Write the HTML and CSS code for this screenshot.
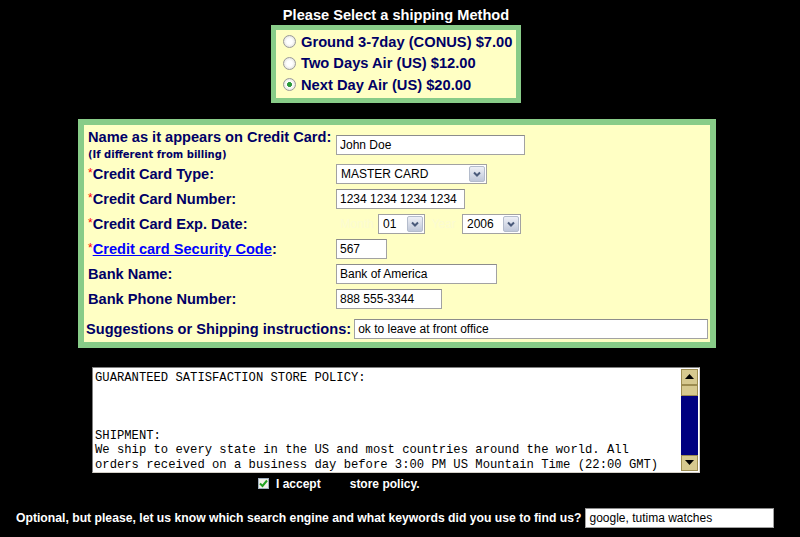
FILE: index.html
```html
<!DOCTYPE html>
<html lang="en">
<head>
    <meta charset="UTF-8">
    <title>Checkout - Payment</title>
    <link rel="stylesheet" href="styles.css">
</head>
<body>
    <div class="page">
        <h2 class="ship-title">Please Select a shipping Method</h2>
        <div class="ship-box">
            <div class="ship-option"><span class="radio"></span>Ground 3-7day (CONUS) $7.00</div>
            <div class="ship-option"><span class="radio"></span>Two Days Air (US) $12.00</div>
            <div class="ship-option"><span class="radio checked"></span>Next Day Air (US) $20.00</div>
        </div>

        <form class="card-box">
            <div class="card-row row-name">
                <div class="label">Name as it appears on Credit Card:<span class="note">(If different from billing)</span></div>
                <input type="text" class="field w-name" value="John Doe">
            </div>
            <div class="card-row">
                <div class="label"><span class="req">*</span>Credit Card Type:</div>
                <div class="select w-type">
                    <select><option>MASTER CARD</option><option>VISA</option></select>
                    <span class="select-btn"><svg width="14" height="14" viewBox="0 0 14 14"><path d="M4 5.5 L7 8.5 L10 5.5" fill="none" stroke="#4a5a7a" stroke-width="2"/></svg></span>
                </div>
            </div>
            <div class="card-row">
                <div class="label"><span class="req">*</span>Credit Card Number:</div>
                <input type="text" class="field w-number" value="1234 1234 1234 1234">
            </div>
            <div class="card-row">
                <div class="label"><span class="req">*</span>Credit Card Exp. Date:</div>
                <div class="exp">
                    <span class="hint w-month">Month</span>
                    <div class="select w-mm">
                        <select><option>01</option><option>02</option></select>
                        <span class="select-btn"><svg width="14" height="14" viewBox="0 0 14 14"><path d="M4 5.5 L7 8.5 L10 5.5" fill="none" stroke="#4a5a7a" stroke-width="2"/></svg></span>
                    </div>
                    <span class="hint w-year">Year</span>
                    <div class="select w-yy">
                        <select><option>2006</option><option>2007</option></select>
                        <span class="select-btn"><svg width="14" height="14" viewBox="0 0 14 14"><path d="M4 5.5 L7 8.5 L10 5.5" fill="none" stroke="#4a5a7a" stroke-width="2"/></svg></span>
                    </div>
                </div>
            </div>
            <div class="card-row">
                <div class="label"><span class="req">*</span><a href="#" class="help-link">Credit card Security Code</a>:</div>
                <input type="text" class="field w-code" value="567">
            </div>
            <div class="card-row">
                <div class="label">Bank Name:</div>
                <input type="text" class="field w-bank" value="Bank of America">
            </div>
            <div class="card-row">
                <div class="label">Bank Phone Number:</div>
                <input type="text" class="field w-phone" value="888 555-3344">
            </div>
            <div class="row-suggest">
                <div class="label">Suggestions or Shipping instructions:</div>
                <input type="text" class="field w-suggest" value="ok to leave at front office">
            </div>
        </form>

        <div class="policy">
            <div class="policy-text">GUARANTEED SATISFACTION STORE POLICY:



SHIPMENT:
We ship to every state in the US and most countries around the world. All
orders received on a business day before 3:00 PM US Mountain Time (22:00 GMT)</div>
            <div class="scrollbar">
                <span class="scroll-btn"><svg width="9" height="5" viewBox="0 0 9 5"><path d="M0 5 L4.5 0 L9 5 Z" fill="#000"/></svg></span>
                <span class="scroll-thumb"></span>
                <span class="scroll-track"></span>
                <span class="scroll-btn"><svg width="9" height="5" viewBox="0 0 9 5"><path d="M0 0 L4.5 5 L9 0 Z" fill="#000"/></svg></span>
            </div>
        </div>

        <div class="accept">
            <span class="checkbox"><svg width="9" height="9" viewBox="0 0 9 9"><path d="M1 4.5 L3.5 7 L8 1.5" fill="none" stroke="#21a121" stroke-width="2"/></svg></span>
            <span>I accept</span>
            <span class="policy-link">store policy.</span>
        </div>

        <div class="find-us">
            <span>Optional, but please, let us know which search engine and what keywords did you use to find us?</span>
            <input type="text" class="field w-find" value="google, tutima watches">
        </div>
    </div>
</body>
</html>
```

FILE: styles.css
```css
* {
    box-sizing: border-box;
}

body {
    margin: 0;
    background-color: #000000;
    font-family: "Liberation Sans", Arial, sans-serif;
}

.page {
    width: 792px;
    padding-top: 7px;
    display: flex;
    flex-direction: column;
    align-items: center;
}

.ship-title {
    margin: 0 0 1px;
    color: #ffffff;
    font-size: 14.6px;
    line-height: 17px;
    font-weight: bold;
}

.ship-box {
    width: 250px;
    border: 5px solid #88cc88;
    background: #ffffc4;
    padding: 1px 0 2px 7px;
}

.ship-option {
    display: flex;
    align-items: center;
    gap: 5px;
    height: 21.5px;
    color: #000066;
    font-size: 14.7px;
    font-weight: bold;
}

.radio {
    width: 13px;
    height: 13px;
    border-radius: 50%;
    border: 1px solid #9a9a9a;
    background: radial-gradient(circle, #ffffff 0 35%, #d6d6ce 100%);
}

.radio.checked {
    background: radial-gradient(circle, #2c9b3c 0 28%, #ffffff 36%, #d6d6ce 100%);
}

.card-box {
    width: 638px;
    margin: 16px 0 0 2px;
    border: 6px solid #88cc88;
    background: #ffffc4;
    padding: 4px 0 0;
}

.card-row {
    display: grid;
    grid-template-columns: 248px auto;
    align-items: center;
    justify-items: start;
    height: 25px;
    padding-left: 4px;
}

.card-row.row-name {
    height: 33px;
    align-items: start;
}

.row-name .label {
    line-height: 17px;
}

.row-name .field {
    margin-top: 6px;
}

.label {
    color: #000066;
    font-size: 14.6px;
    font-weight: bold;
    white-space: nowrap;
}

.note {
    display: block;
    padding-top: 2px;
    font-family: "DejaVu Sans", Verdana, sans-serif;
    font-size: 10px;
    line-height: 14px;
}

.req {
    color: #ff0000;
    font-weight: normal;
    font-size: 12px;
    vertical-align: 2px;
}

.help-link {
    color: #0000ff;
    text-decoration: underline;
}

.field {
    height: 20px;
    border: 1px solid #a2a2a2;
    border-top-color: #8c8c8c;
    background: #ffffff;
    padding: 0 3px;
    font-family: "Liberation Sans", Arial, sans-serif;
    font-size: 12px;
    color: #000000;
    outline: none;
}

.w-name { width: 189px; }
.w-number { width: 129px; }
.w-code { width: 51px; }
.w-bank { width: 161px; }
.w-phone { width: 106px; }
.w-suggest { width: 354px; }
.w-find { width: 189px; }

.select {
    position: relative;
    height: 20px;
}

.w-type { width: 151px; }
.w-mm { width: 47px; }
.w-yy { width: 59px; }

.select select {
    appearance: none;
    width: 100%;
    height: 20px;
    border: 1px solid #a2a2a2;
    background: #ffffff;
    padding: 0 0 0 4px;
    font-family: "Liberation Sans", Arial, sans-serif;
    font-size: 12px;
    color: #000000;
}

.select-btn {
    position: absolute;
    top: 2px;
    right: 2px;
    width: 16px;
    height: 16px;
    display: flex;
    align-items: center;
    justify-content: center;
    border: 1px solid #b4bccc;
    border-radius: 2px;
    background: linear-gradient(#eef0f6, #bfc7d9);
}

.exp {
    display: flex;
    align-items: center;
}

.hint {
    color: #fbfbd2;
    font-size: 12px;
    text-align: center;
}

.w-month { width: 42px; }
.w-year { width: 37px; }

.row-suggest {
    display: flex;
    align-items: center;
    gap: 3px;
    height: 25px;
    margin-top: 5px;
    padding-left: 2px;
}

.policy {
    display: flex;
    width: 608px;
    height: 106px;
    margin-top: 19px;
    border: 1px solid #808080;
    border-right-color: #d4d0c8;
    border-bottom-color: #d4d0c8;
    background: #ffffff;
}

.policy-text {
    flex: 1;
    padding: 3px 2px;
    overflow: hidden;
    white-space: pre;
    font-family: "Liberation Mono", "Courier New", monospace;
    font-size: 12.2px;
    line-height: 14.5px;
    color: #000000;
}

.scrollbar {
    width: 18px;
    padding: 1px 1px 1px 0;
    display: flex;
    flex-direction: column;
}

.scroll-btn {
    height: 16px;
    display: flex;
    align-items: center;
    justify-content: center;
    border: 1px solid #9c8c50;
    background: #d6c98f;
}

.scroll-thumb {
    height: 11px;
    border: 1px solid #9c8c50;
    background: #d6c98f;
}

.scroll-track {
    flex: 1;
    background: #000080;
}

.accept {
    align-self: flex-start;
    display: flex;
    align-items: center;
    height: 14px;
    margin: 4px 0 0 258px;
    color: #ffffff;
    font-size: 12px;
    font-weight: bold;
}

.checkbox {
    width: 11px;
    height: 11px;
    margin-right: 7px;
    display: flex;
    align-items: center;
    justify-content: center;
    border: 1px solid #a0b0c0;
    background: #f0f0ea;
}

.policy-link {
    margin-left: 29px;
}

.find-us {
    align-self: stretch;
    display: flex;
    align-items: center;
    gap: 4px;
    height: 20px;
    margin-top: 17px;
    padding-left: 16px;
    color: #ffffff;
    font-size: 12.2px;
    font-weight: bold;
}
```
